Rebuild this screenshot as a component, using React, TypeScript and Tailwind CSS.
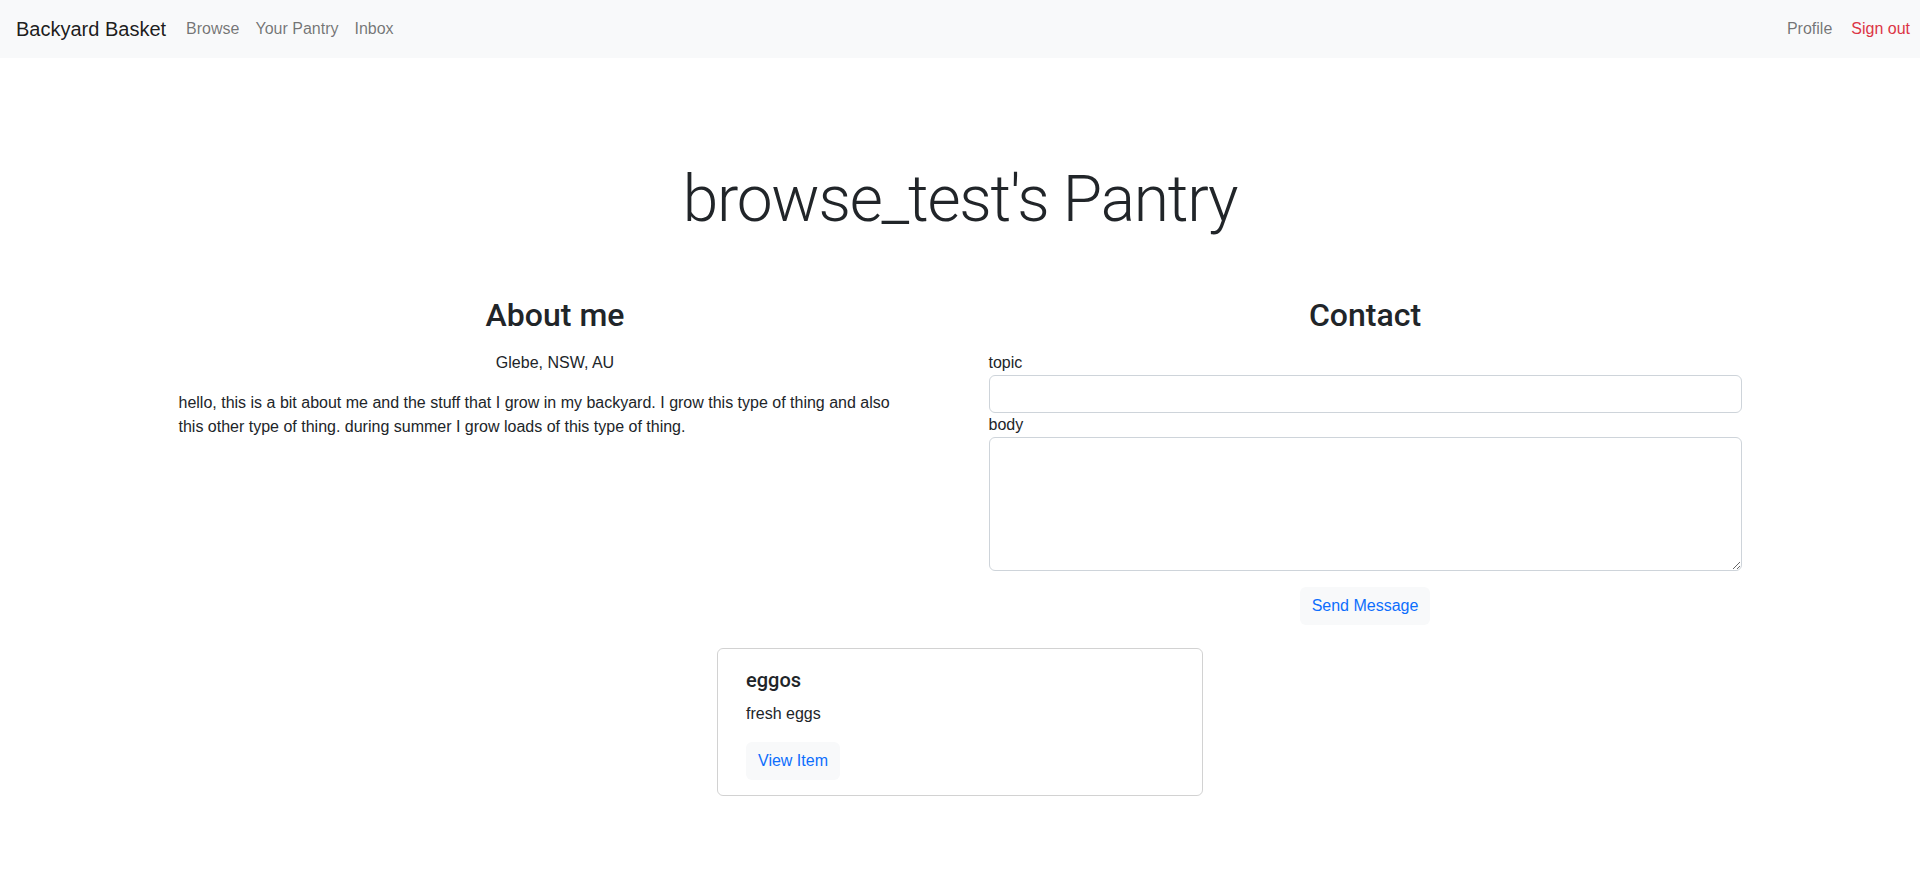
import type { FC } from "react";

const font = { fontFamily: '"Liberation Sans", Arial, sans-serif' };
const heading = { fontFamily: 'Roboto, "Liberation Sans", Arial, sans-serif' };

const NavBar: FC = () => (
  <nav className="flex h-[58px] items-center justify-between bg-[#f8f9fa] pl-4 pr-[10px]">
    <div className="flex items-center">
      <a className="mr-[20px] text-[20px] text-[rgba(0,0,0,0.9)]">Backyard Basket</a>
      <div className="flex items-center gap-4 text-[16px] text-[rgba(0,0,0,0.55)]">
        <a>Browse</a>
        <a>Your Pantry</a>
        <a>Inbox</a>
      </div>
    </div>
    <div className="flex items-center gap-[19px] text-[16px]">
      <a className="text-[rgba(0,0,0,0.55)]">Profile</a>
      <a className="text-[#dc3545]">Sign out</a>
    </div>
  </nav>
);

const ItemCard: FC<{ name: string; description: string }> = ({ name, description }) => (
  <div className="mx-auto w-[486px] rounded-md border border-[rgba(0,0,0,0.175)] px-[28px] pt-[19px] pb-[15px]">
    <h5 className="mb-[10px] text-[20px] leading-[1.2] font-medium text-[#212529]" style={heading}>
      {name}
    </h5>
    <p className="mb-4 text-[16px] leading-6">{description}</p>
    <button className="h-[38px] rounded-md bg-[#f8f9fa] px-3 text-[16px] text-[#0d6efd]">
      View Item
    </button>
  </div>
);

export default function App() {
  return (
    <div className="min-h-[870px] bg-white text-[16px] leading-6 text-[#212529]" style={font}>
      <NavBar />
      <main className="pb-16">
        <h1
          className="mt-[104px] text-center text-[64px] leading-[1.2] font-light tracking-[-1.2px]"
          style={heading}
        >
          browse_test's Pantry
        </h1>

        <div className="mx-auto mt-[57px] grid w-[1563px] grid-cols-2 gap-[57px]">
          <section>
            <h2 className="mb-[17px] text-center text-[32px] leading-[1.2] font-medium" style={heading}>
              About me
            </h2>
            <p className="mb-4 text-center">Glebe, NSW, AU</p>
            <p className="pr-6">
              hello, this is a bit about me and the stuff that I grow in my backyard. I grow this
              type of thing and also this other type of thing. during summer I grow loads of this
              type of thing.
            </p>
          </section>

          <section>
            <h2 className="mb-[17px] text-center text-[32px] leading-[1.2] font-medium" style={heading}>
              Contact
            </h2>
            <form className="flex flex-col" onSubmit={(e) => e.preventDefault()}>
              <label className="block">topic</label>
              <input
                type="text"
                className="h-[38px] w-full rounded-md border border-[#ced4da] bg-white px-3"
              />
              <label className="block">body</label>
              <textarea
                rows={5}
                className="h-[134px] w-full rounded-md border border-[#ced4da] bg-white px-3 py-1.5"
              />
              <div className="mt-4 flex justify-center">
                <button className="h-[38px] rounded-md bg-[#f8f9fa] px-3 text-[#0d6efd]">
                  Send Message
                </button>
              </div>
            </form>
          </section>
        </div>

        <div className="mt-[23px]">
          <ItemCard name="eggos" description="fresh eggs" />
        </div>
      </main>
    </div>
  );
}
